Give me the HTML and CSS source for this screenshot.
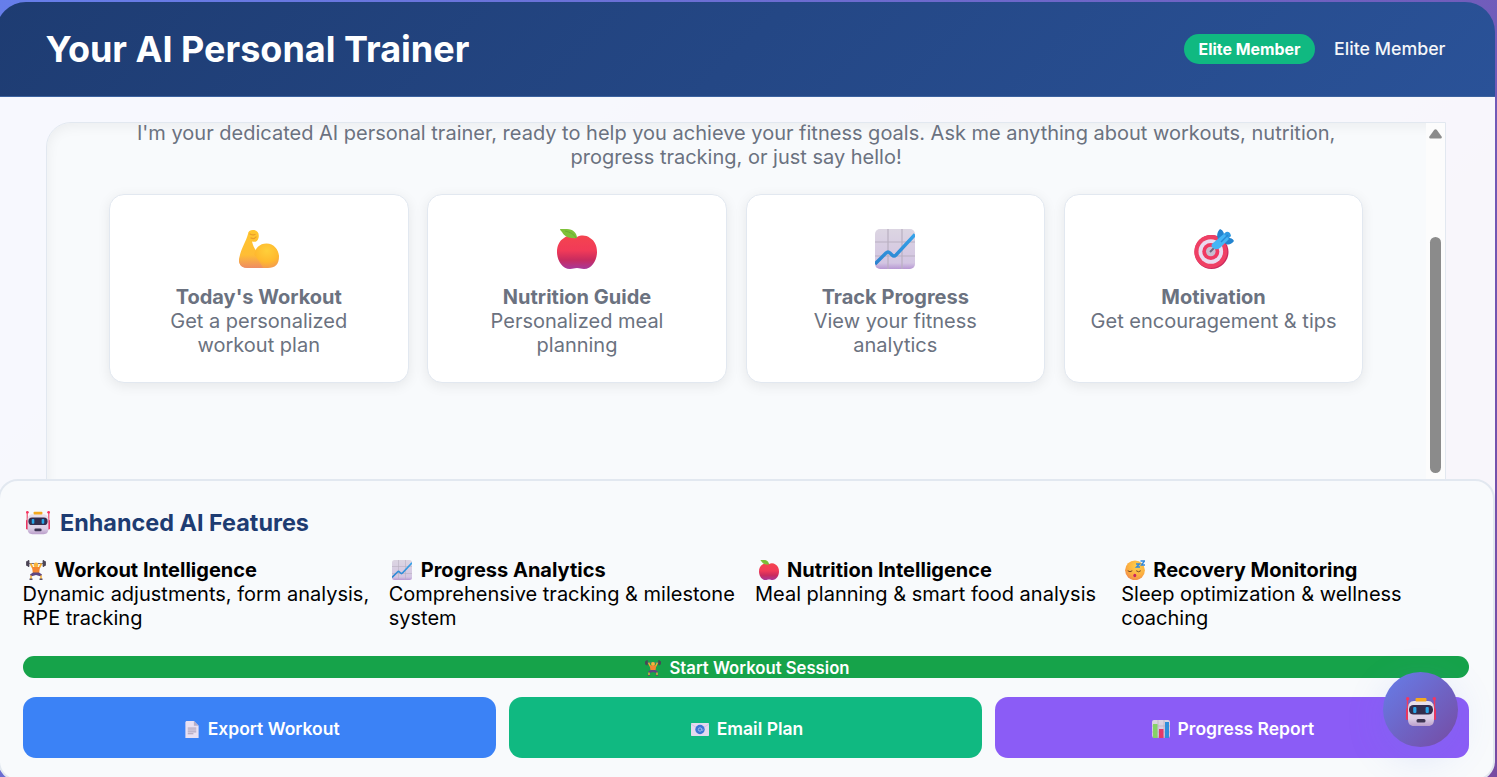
FILE: index.html
```html
<!DOCTYPE html>
<html lang="en">
<head>
<meta charset="utf-8">
<title>Your AI Personal Trainer</title>
<link rel="stylesheet" href="styles.css">
</head>
<body>
<svg class="sprite" aria-hidden="true">
  <defs>
    <linearGradient id="gArm" gradientUnits="userSpaceOnUse" x1="0" y1="0" x2="0" y2="40"><stop offset="0" stop-color="#ffc62e"/><stop offset=".65" stop-color="#ffbd35"/><stop offset="1" stop-color="#ec8866"/></linearGradient>
    <radialGradient id="gBicep" cx=".55" cy=".3" r=".75"><stop offset="0" stop-color="#ffcf3a"/><stop offset=".6" stop-color="#ffb92e"/><stop offset="1" stop-color="#f19655"/></radialGradient>
    <linearGradient id="gApple" x1="0" y1="0" x2="0" y2="1"><stop offset="0" stop-color="#f4444f"/><stop offset=".45" stop-color="#f13a58"/><stop offset=".72" stop-color="#c92c5e"/><stop offset="1" stop-color="#a8389a"/></linearGradient>
    <linearGradient id="gPaper" x1="0" y1="0" x2="0" y2="1"><stop offset="0" stop-color="#dcd5e2"/><stop offset=".85" stop-color="#d3c5e2"/><stop offset="1" stop-color="#b798d3"/></linearGradient>
    <linearGradient id="gLine" x1="0" y1="0" x2="0" y2="1"><stop offset="0" stop-color="#36a3ea"/><stop offset="1" stop-color="#2b83cf"/></linearGradient>
    <linearGradient id="gHead" x1="0" y1="0" x2="0" y2="1"><stop offset="0" stop-color="#eae2ec"/><stop offset=".7" stop-color="#dccfe6"/><stop offset="1" stop-color="#bb9fcb"/></linearGradient>
    <radialGradient id="gFace" cx=".6" cy=".3" r=".8"><stop offset="0" stop-color="#ffd04a"/><stop offset=".6" stop-color="#fbae40"/><stop offset="1" stop-color="#ee7f50"/></radialGradient>
  </defs>
  <symbol id="arm" viewBox="0 0 40 40">
    <path fill="url(#gArm)" d="M9 5C9 2 12 .5 15 1c4 .5 5.500 4 4.500 8-.8 3.500-3.500 4.500-6.500 3.500 1 4 2 6.500 4 9 3 4 5 8 8 17.500H9c-6 0-9-3-9-8 1-10 7-18 9-26Z"/>
    <path fill="url(#gBicep)" d="M15 29c0-9 5-14.500 12.500-14.500S40 21 40 27.500c0 8-4 11.500-11 11.500H13c2-3 2-6 2-10Z"/>
    <path fill="url(#gArm)" d="M0 31c2-7 6-10 12-9 4 4 8 10 12 17H9c-6 0-9-3-9-8Z"/>
    <path fill="none" stroke="#e99c2b" stroke-width="1.200" stroke-linecap="round" d="M11 5q3 1.500 5 .5M12 9q3 1.500 5-1"/>
  </symbol>
  <symbol id="apple" viewBox="0 0 40 40">
    <path fill="url(#gApple)" d="M20 8c4-2 9-2 13 1 5 3 7 8 7 14 0 8-5 17-13 17-3 0-4-1-7-1s-4 1-7 1C5 40 0 31 0 23 0 17 2 12 7 9c4-3 9-3 13-1Z"/>
    <path fill="#7ec13a" d="M3 0h7c6 0 10 4 10 9-8 1-13-2-15-6C4 2 3 1 3 0Z"/>
    <path stroke="#6cae34" fill="none" d="M8 2c5 1 9 3 11 7"/>
  </symbol>
  <symbol id="chart" viewBox="0 0 40 40">
    <rect width="40" height="40" rx="5" fill="url(#gPaper)"/>
    <path stroke="#b9b0c1" stroke-width="1.200" d="M13 0v40M27 0v40M0 13h40M0 27h40"/>
    <path fill="none" stroke="url(#gLine)" stroke-width="3.400" d="M0 35 11 24q2-2 4 0l2 2q2 2 4 0L40 5.500" stroke-linejoin="round"/>
  </symbol>
  <symbol id="target" viewBox="0 0 40 40">
    <circle cx="17.500" cy="23" r="17" fill="#c9295f"/>
    <circle cx="16.800" cy="22.500" r="16.500" fill="#ef4065"/>
    <circle cx="16.800" cy="22.500" r="12.300" fill="#eadcf0"/>
    <circle cx="16.800" cy="22.500" r="8.500" fill="#f03a62"/>
    <circle cx="16.800" cy="22.500" r="4.800" fill="#c8bdcf"/>
    <path stroke="#6d6680" stroke-width="2" d="m16 23 5-5"/>
    <path fill="#2384cf" d="M25 11c-3-3-2-8 1-11q5 2 4 9ZM30 13c3 4 7 3 10-1q-2-4-9-3Z"/>
    <path fill="#2f9ae2" d="m25 9 7-6q4-1 5 4l-7 7Z"/>
    <path fill="#44b5f5" d="M19 14 30 5l5 5-9 9q-4 2.500-7 0t0-5Z"/>
    <path stroke="#2789d6" stroke-width="1.500" d="m27 13 7-7"/>
  </symbol>
  <symbol id="robot" viewBox="0 0 30 30">
    <path stroke="#ed3c62" stroke-width="1.400" d="M1.500 1.500V13M28.500 1.500V13"/>
    <circle cx="1.700" cy="1.700" r="1.700" fill="#f73560"/><circle cx="28.300" cy="1.700" r="1.700" fill="#f73560"/>
    <rect y="11" width="4" height="12" rx="1.500" fill="#e73762"/><rect x="26" y="11" width="4" height="12" rx="1.500" fill="#e73762"/>
    <path fill="url(#gHead)" d="M8 4h14c4 0 6 3 6 8v10c0 5-2 7-6 7H8c-4 0-6-2-6-7V12c0-5 2-8 6-8Z"/>
    <rect x="9.500" y="1" width="11" height="3.500" rx="1" fill="#f5a91f"/>
    <rect x="3" y="8" width="24" height="9.500" rx="4.500" fill="#332d4d"/>
    <rect x="7.200" y="10" width="3.200" height="6" rx="1" fill="#29a5e8"/><rect x="19.600" y="10" width="3.200" height="6" rx="1" fill="#29a5e8"/>
    <rect x="10.500" y="22" width="9" height="3.400" rx="1.500" fill="#3d3452"/>
  </symbol>
  <symbol id="lifter" viewBox="0 0 20 20">
    <path stroke="#777080" stroke-width="1" d="M1 3.500h18"/>
    <path stroke="#4b4556" stroke-width="1.800" stroke-linecap="round" d="M2.500 1v5M17.500 1v5M1 2v3M19 2v3"/>
    <path fill="none" stroke="#f6ad32" stroke-width="1.800" d="m4.500 3.500 2 4 3 2h1l3-2 2-4"/>
    <circle cx="10" cy="5" r="2.400" fill="#f9b43c"/>
    <path fill="#f58632" d="M6 7h8l-1 7H7Z"/>
    <path fill="#5d4680" d="M7 12.500h6l3 2-1 2-5-1.500L5 16.500l-1-2Z"/>
    <path fill="none" stroke="#f9b43c" stroke-width="1.600" d="M5 15.500V19M15 15.500V19"/>
    <path stroke="#5c5269" stroke-width="1.400" d="M3.500 19.300h3M13.500 19.300h3"/>
  </symbol>
  <symbol id="sleep" viewBox="0 0 20 20">
    <circle cx="10" cy="10.300" r="9.900" fill="url(#gFace)"/>
    <path fill="none" stroke="#72442b" stroke-width="1" stroke-linecap="round" d="M3 11q2 1.800 4 0M11.500 11q2 1.800 4 0"/>
    <ellipse cx="9.800" cy="15.500" rx="1.500" ry="1.800" fill="#cb2463"/>
    <path fill="none" stroke="#3289dc" stroke-width="1.400" d="M15.500 1h4l-3 4h4M11 4h3.500l-3 3H15"/>
  </symbol>
  <symbol id="page" viewBox="0 0 14 18">
    <path fill="#e9e0f2" d="M1 0h8l5 5v13H0V1Z"/><path fill="#b9aec6" d="m9 0 5 5H9Z"/>
    <path stroke="#a69ab2" d="M2.500 7.500h9M2.500 9.500h9M2.500 11.500h9M2.500 13.500h6"/>
  </symbol>
  <symbol id="mail" viewBox="0 0 18 13">
    <rect width="18" height="13" rx=".7" fill="#e4d9ef"/><path fill="none" stroke="#d3c3e3" d="m0 1 9 6 9-6"/>
    <circle cx="9" cy="6.500" r="4.700" fill="#3c76d5"/><circle cx="9" cy="6.500" r="1.700" fill="none" stroke="#9fb8ea"/><path fill="none" stroke="#9fb8ea" stroke-width=".7" d="M10.700 5v2.200q1.500 1 1.500-1"/>
  </symbol>
  <symbol id="bars" viewBox="0 0 18 18">
    <rect width="18" height="18" rx="2" fill="url(#gPaper)"/><path stroke="#b9b0c1" stroke-width=".7" d="M0 6h18M0 12h18M6 0v18M12 0v18"/>
    <path fill="#85d267" d="M1 4h4.500v14H1Z"/><path fill="#e43969" d="M7 9h4.500v9H7Z"/><path fill="#2e8edb" d="M13 2h4v16h-4Z"/>
  </symbol>
</svg>

<div class="shell">
  <header class="header">
    <h1 class="title">Your AI Personal Trainer</h1>
    <div class="member"><span class="badge">Elite Member</span><span class="tier">Elite Member</span></div>
  </header>
  <main class="main">
    <section class="chat">
      <div class="chat-body">
        <p class="intro">I'm your dedicated AI personal trainer, ready to help you achieve your fitness goals. Ask me anything about workouts, nutrition,<br>progress tracking, or just say hello!</p>
        <div class="cards">
          <article class="card"><svg class="emoji"><use href="#arm"/></svg><strong>Today's Workout</strong><span>Get a personalized<br>workout plan</span></article>
          <article class="card"><svg class="emoji"><use href="#apple"/></svg><strong>Nutrition Guide</strong><span>Personalized meal<br>planning</span></article>
          <article class="card"><svg class="emoji"><use href="#chart"/></svg><strong>Track Progress</strong><span>View your fitness<br>analytics</span></article>
          <article class="card"><svg class="emoji"><use href="#target"/></svg><strong>Motivation</strong><span>Get encouragement &amp; tips</span></article>
        </div>
      </div>
      <div class="scrollbar"><svg class="arrow" viewBox="0 0 13 10"><path d="M5.300.8q1.200-1.300 2.400 0l4.700 6.500Q13.500 9.500 11.500 9.500h-10Q-.5 9.500.6 7.300Z"/></svg><div class="thumb"></div></div>
    </section>
  </main>
  <section class="panel">
    <h2 class="panel-title"><svg><use href="#robot"/></svg>Enhanced AI Features</h2>
    <div class="features">
      <div><h3><svg><use href="#lifter"/></svg>Workout Intelligence</h3><p>Dynamic adjustments, form analysis,<br>RPE tracking</p></div>
      <div><h3><svg><use href="#chart"/></svg>Progress Analytics</h3><p>Comprehensive tracking &amp; milestone<br>system</p></div>
      <div><h3><svg><use href="#apple"/></svg>Nutrition Intelligence</h3><p>Meal planning &amp; smart food analysis</p></div>
      <div><h3><svg><use href="#sleep"/></svg>Recovery Monitoring</h3><p>Sleep optimization &amp; wellness<br>coaching</p></div>
    </div>
    <button class="start"><svg><use href="#lifter"/></svg>Start Workout Session</button>
    <div class="actions">
      <button class="action export"><svg class="i-page"><use href="#page"/></svg>Export Workout</button>
      <button class="action email"><svg class="i-mail"><use href="#mail"/></svg>Email Plan</button>
      <button class="action report"><svg class="i-bars"><use href="#bars"/></svg>Progress Report</button>
    </div>
  </section>
</div>
<button class="assistant" aria-label="Assistant"><svg><use href="#robot"/></svg></button>
</body>
</html>
```
FILE: styles.css
```css
* { box-sizing: border-box; }
body {
  margin: 0;
  height: 777px;
  overflow: hidden;
  font: 20px/24px Inter, sans-serif;
  background: linear-gradient(135deg, #667eea 0%, #764ba2 100%);
}
h1, h2, h3, p { margin: 0; }
svg { display: block; flex: none; overflow: visible; }
button { border: 0; padding: 0; font: inherit; color: #fff; }
.sprite { position: absolute; width: 0; height: 0; }

.shell {
  display: flex;
  flex-direction: column;
  width: 1499px;
  height: 779px;
  margin: 2px 0 0 -4px;
  border-radius: 30px 30px 0 0;
  overflow: hidden;
}
.header {
  flex: none;
  display: flex;
  align-items: center;
  justify-content: space-between;
  height: 95px;
  padding: 0 49.500px;
  color: #fff;
  background: linear-gradient(135deg, #1e3c72 0%, #2a5298 100%);
  border-bottom: 1px solid #3c629f;
}
.title { font-size: 36px; line-height: 44px; font-weight: 700; }
.member { display: flex; align-items: center; gap: 19px; }
.badge {
  height: 30px;
  padding: 0 14.500px;
  border-radius: 15px;
  background: #10b981;
  font-size: 15.900px;
  line-height: 31px;
  font-weight: 700;
}
.tier { font-size: 17.800px; font-weight: 500; opacity: .95; }

.main {
  flex: none;
  height: 402px;
  margin-bottom: -20px;
  padding: 25px 49px 0 50px;
  overflow: hidden;
  background: rgba(255, 255, 255, .95);
}
.chat {
  display: flex;
  height: 420px;
  border: 1px solid #e2e8f0;
  border-radius: 25px 0 0 25px;
  background: #f8fafc;
  box-shadow: inset 0 3px 13px rgba(0, 0, 0, .06);
}
.chat-body { flex: 1; padding: 0 62.700px 0 62px; }
.intro { margin: -2px -40px 25px; text-align: center; color: #6b7280; white-space: nowrap; }
.cards { display: grid; grid-template-columns: repeat(4, 1fr); gap: 18.750px; }
.card {
  display: flex;
  flex-direction: column;
  align-items: center;
  height: 189px;
  padding-top: 34px;
  border: 1px solid #e2e8f0;
  border-radius: 15px;
  background: #fff;
  box-shadow: 0 3px 13px rgba(0, 0, 0, .08);
  color: #6b7280;
  text-align: center;
}
.emoji { width: 40px; height: 40px; margin-bottom: 16px; }
.scrollbar { width: 19px; background: #fcfcfc; padding: 6px 4px 0 3px; }
.arrow { width: 13px; height: 10px; fill: #8b8b8b; }
.thumb { width: 11px; height: 236px; margin: 98px 0 0 1px; border-radius: 6px; background: #8b8b8b; }

.panel {
  position: relative;
  flex: none;
  height: 302px;
  margin-left: 1.500px;
  margin-right: .5px;
  padding: 26px 24px 0 23px;
  border: 2px solid #e2e8f0;
  border-radius: 20px;
  background: #f8fafc;
}
.panel-title { display: flex; align-items: center; gap: 10px; height: 32px; padding-left: 3.500px; font-size: 23.400px; font-weight: 700; color: #1e3c72; }
.panel-title svg { width: 24px; height: 24px; }
.features { display: grid; grid-template-columns: repeat(4, 1fr); gap: 19px; height: 72px; margin-top: 19px; }
.features p { white-space: nowrap; }
.features h3 { display: flex; align-items: center; gap: 8.500px; padding-left: 3.500px; font-size: 20px; font-weight: 700; }
.features h3 svg { width: 20px; height: 20px; }
.start {
  display: flex;
  align-items: center;
  justify-content: center;
  gap: 8px;
  width: 100%;
  height: 22px;
  margin: 26px 0 19px;
  padding: 2px 0 0 4px;
  border-radius: 11px;
  background: #16a34a;
  font-size: 16.700px;
  font-weight: 600;
}
.start svg { width: 16px; height: 16px; }
.actions { display: grid; grid-template-columns: repeat(3, 1fr); gap: 13px; }
.action {
  display: flex;
  align-items: center;
  justify-content: center;
  gap: 8px;
  height: 61px;
  padding: 3px 0 0 2px;
  border-radius: 13px;
  font-size: 17.500px;
  font-weight: 600;
}
.export { padding-left: 6px; gap: 9px; background: #3b82f6; }
.email { padding-left: 3px; background: #10b981; }
.report { background: #8b5cf6; }
.i-page { width: 14px; height: 17px; }
.i-mail { width: 18px; height: 13px; }
.i-bars { width: 18px; height: 18px; }

.assistant {
  position: absolute;
  left: 1383px;
  top: 672px;
  display: flex;
  align-items: center;
  justify-content: center;
  width: 75px;
  height: 75px;
  padding-top: 4px;
  border-radius: 50%;
  background: linear-gradient(135deg, #667eea, #764ba2);
  box-shadow: 0 10px 38px rgba(102, 126, 234, .18);
}
.assistant svg { width: 30px; height: 30px; }
```
